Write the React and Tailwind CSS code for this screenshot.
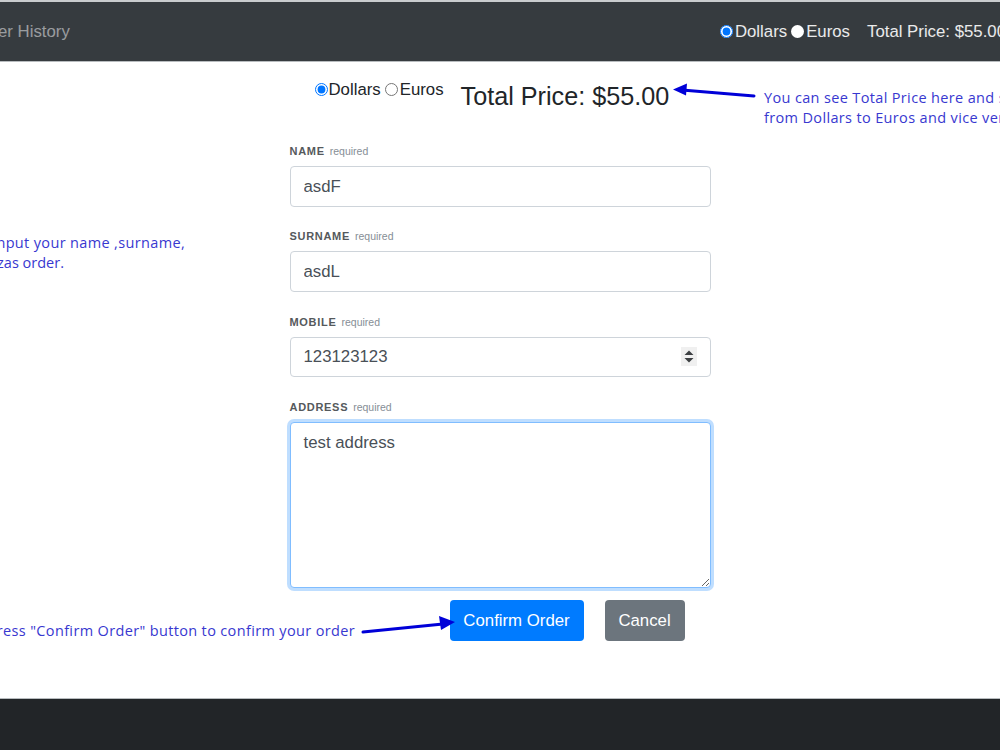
import React from 'react';

const inputClass = 'block w-full h-[41px] px-[13px] bg-white border border-[#ced4da] rounded text-[16.8px] text-[#495057] outline-none';
const noteClass = "absolute text-[14.5px] leading-[20px] text-[#3838d0] whitespace-nowrap font-['Open_Sans',sans-serif] tracking-[0.35px]";

function FieldLabel({ name }) {
  return (
    <div className="h-[16px] mb-[7px] flex items-baseline gap-[5px] leading-[16px] whitespace-nowrap">
      <span className="text-[11px] font-bold tracking-[0.7px] text-[#55595c]">{name}</span>
      <span className="text-[10.5px] text-[#868e96]">required</span>
    </div>
  );
}

function Arrow({ className, viewBox, line, head }) {
  return (
    <svg className={className} viewBox={viewBox} fill="none">
      <path d={line} stroke="#0000d8" strokeWidth="3" strokeLinecap="round" />
      <path d={head} fill="#0000d8" />
    </svg>
  );
}

export default function App() {
  return (
    <div className="relative w-[1000px] h-[750px] overflow-hidden bg-white font-['Liberation_Sans',Arial,sans-serif] flex flex-col">
      <header className="h-[62px] shrink-0 border-t-2 border-[#c9ccce] border-b border-b-[#b8bcbf] bg-[#363b3f] flex items-center justify-between -ml-[30px] -mr-[6px] text-[16.8px]">
        <span className="text-white/50 whitespace-nowrap">Order History</span>
        <div className="flex items-center text-white/90 whitespace-nowrap">
          <input type="radio" name="nav-currency" defaultChecked className="w-[13px] h-[13px] m-0" />
          <span className="ml-[2px]">Dollars</span>
          <span className="ml-[4px] w-[13px] h-[13px] rounded-full bg-white" />
          <span className="ml-[2px]">Euros</span>
          <span className="ml-[17px]">Total Price: $55.00</span>
        </div>
      </header>

      <main className="flex-1 flex flex-col items-center">
        <div className="w-[421px] h-[81px] flex items-start whitespace-nowrap">
          <div className="flex items-center mt-[15px] ml-[25px] text-[16.8px] text-[#212529]">
            <input type="radio" name="currency" defaultChecked className="w-[13px] h-[13px] m-0" />
            <span className="ml-[1px]">Dollars</span>
            <input type="radio" name="currency" className="w-[13px] h-[13px] m-0 ml-[4px]" />
            <span className="ml-[2px]">Euros</span>
          </div>
          <div className="ml-[17px] mt-[19px] text-[25.2px] leading-[30px] text-[#212529]">Total Price: $55.00</div>
        </div>

        <form className="w-[421px] flex flex-col">
          <FieldLabel name="NAME" />
          <input type="text" defaultValue="asdF" className={inputClass} />
          <div className="h-[21px]" />
          <FieldLabel name="SURNAME" />
          <input type="text" defaultValue="asdL" className={inputClass} />
          <div className="h-[22px]" />
          <FieldLabel name="MOBILE" />
          <div className="relative">
            <input
              type="number"
              defaultValue="123123123"
              className="block w-full h-[40px] px-[13px] bg-white border border-[#ced4da] rounded text-[16.8px] text-[#495057] outline-none [appearance:textfield] [&::-webkit-inner-spin-button]:appearance-none"
            />
            <svg className="absolute right-[14px] top-[10px] w-[16px] h-[19px] bg-[#f0f0f0]" viewBox="0 0 16 19">
              <path d="M8 3.5 L12.5 8 H3.5 Z M3.5 11 H12.5 L8 15.5 Z" fill="#3d4043" />
            </svg>
          </div>
          <div className="h-[22px]" />
          <FieldLabel name="ADDRESS" />
          <textarea
            defaultValue="test address"
            className="block w-full h-[166px] px-[13px] py-[7px] bg-white border border-[#80bdff] rounded text-[16.8px] text-[#495057] outline-none shadow-[0_0_0_3px_rgba(0,123,255,0.25)]"
          />
          <div className="flex mt-[12px] ml-[160px] gap-[21px]">
            <button type="button" className="w-[134px] h-[41px] rounded bg-[#007bff] text-white text-[16.8px]">Confirm Order</button>
            <button type="button" className="w-[80px] h-[41px] rounded bg-[#6c757d] text-white text-[16.8px]">Cancel</button>
          </div>
        </form>
      </main>

      <footer className="h-[52px] shrink-0 border-t border-[#b8bcbf] bg-[#222528]" />

      {/* annotations pasted on top of the screenshot */}
      <Arrow className="absolute left-[670px] top-[80px] w-[90px] h-[24px]" viewBox="0 0 90 24" line="M84 16 L12 10" head="M3 9.5 L17 3.5 L16 15.5 Z" />
      <Arrow className="absolute left-[358px] top-[612px] w-[100px] h-[26px]" viewBox="0 0 100 26" line="M5 20 L85 12" head="M97 10 L81 4 L83 18 Z" />

      <div className={noteClass + ' left-[764px] top-[88px]'}>
        <div>You can see Total Price here and switch</div>
        <div>from Dollars to Euros and vice versa</div>
      </div>
      <div className={noteClass + ' right-[815px] top-[233px]'}>Input your name ,surname,</div>
      <div className={noteClass + ' right-[936px] top-[253px]'}><span className="tracking-normal">pizzas order.</span></div>
      <div className={noteClass + ' right-[645px] top-[621px]'}>Press "Confirm Order" button to confirm your order</div>
    </div>
  );
}
